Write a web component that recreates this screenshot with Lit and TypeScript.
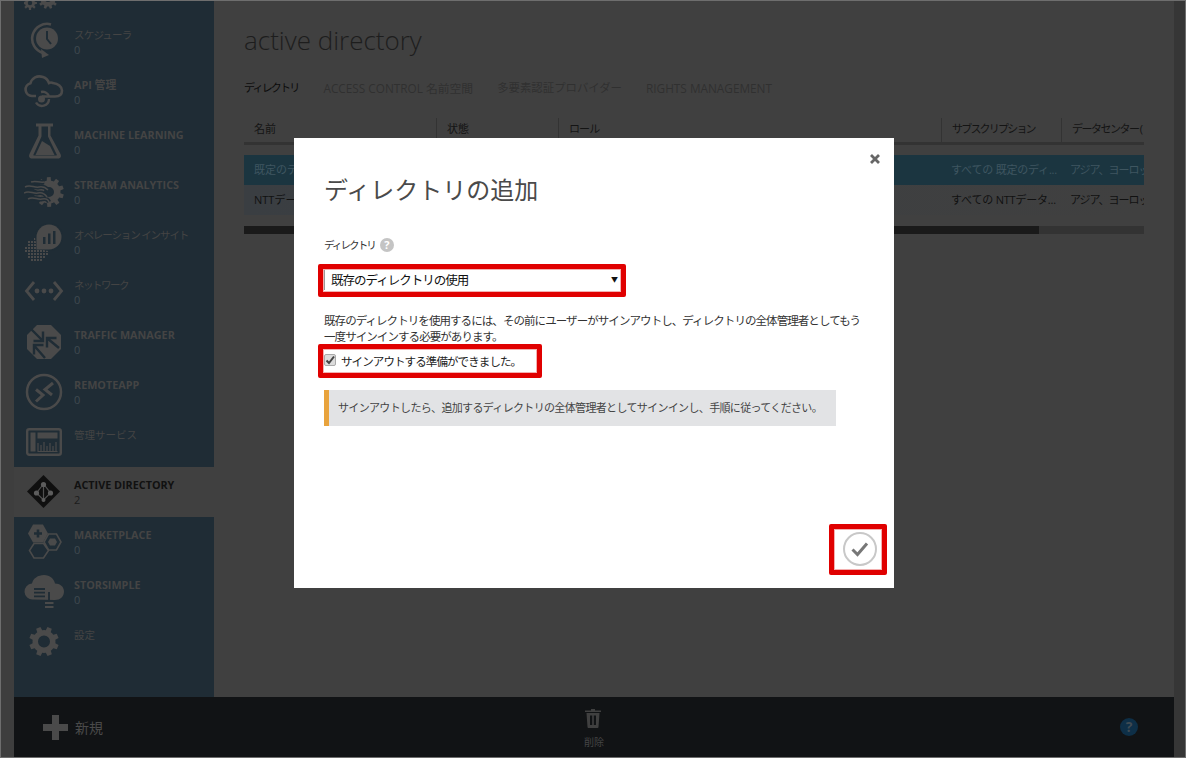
import { LitElement, html, css, svg } from "lit";
import { customElement } from "lit/decorators.js";

function gear(cx: number, cy: number, ro: number, ri: number, hole: number, teeth: number, rot = 0) {
  const pts: string[] = [];
  const step = (Math.PI * 2) / teeth;
  for (let i = 0; i < teeth; i++) {
    const a = rot + i * step;
    const seq: [number, number][] = [
      [ri, a - step * 0.5],
      [ri, a - step * 0.3],
      [ro, a - step * 0.2],
      [ro, a + step * 0.2],
      [ri, a + step * 0.3],
    ];
    for (const [r, t] of seq) {
      pts.push(`${(cx + r * Math.cos(t)).toFixed(2)} ${(cy + r * Math.sin(t)).toFixed(2)}`);
    }
  }
  const h = hole
    ? ` M${cx - hole} ${cy} a${hole} ${hole} 0 1 0 ${hole * 2} 0 a${hole} ${hole} 0 1 0 ${-hole * 2} 0 Z`
    : "";
  return `M${pts.join(" L")} Z${h}`;
}

const BG = "#1f2c35";
const FG = "#4a4a4a";

function dots() {
  const out: any[] = [];
  for (let y = 16; y < 39; y += 3) {
    for (let x = 1; x < 26; x += 3) {
      const d = Math.hypot(x - 12, y - 27);
      if (d < 11.5) out.push(svg`<rect x=${x} y=${y} width="2" height="2" fill=${FG}/>`);
    }
  }
  return out;
}

const WAVES = "M1 15c5-3 9 1 14 0s7 1 9 3M0 21c5-3 9 1 14 0s7 1 9 4M4 27c5-3 9 1 14 0s6 1 7 3M7 10c5-2 8 1 13 0";

const ICONS: Record<string, any> = {
  gears: svg`<path fill-rule="evenodd" fill=${FG} d=${gear(6, 31, 7, 5, 2.2, 8)}/><path fill-rule="evenodd" fill=${FG} d=${gear(24, 27, 10, 7.5, 3, 10)}/>`,
  schedule: svg`<circle cx="23" cy="16.5" r="11" fill=${FG}/><path d="M23 9v8l4 5" stroke=${BG} stroke-width="2" fill="none"/><path d="M27 2.4A14.6 14.6 0 0 0 19 31" fill="none" stroke=${FG} stroke-width="2.6"/><path d="M17 27l8 6-7 3z" fill=${FG}/>`,
  api: svg`<path d="M12 24H8a6.5 6.5 0 0 1-1.5-12.8C8 6 13 3 19 5c3 1 5 3 6 6 1-.5 3-.5 4 0 5 .5 9 3.5 9 7.5 0 4-3 6-7 6H18" fill="none" stroke=${FG} stroke-width="2.6"/><circle cx="17.5" cy="27" r="3.5" fill=${FG}/><path d="M25 27a7 7 0 0 1-13 3.5M17 20a7 7 0 0 1 8 4" fill="none" stroke=${FG} stroke-width="2.4"/>`,
  flask: svg`<path fill=${FG} d="M12 1.5h17v3h-2.5v9L36.5 32c1 2 .5 4-1.5 4.5H7c-2 -.5-2.5-2.5-1.5-4.5L14.5 13.5v-9H12zM17.5 4.5v10L9.5 32.5c-.3 .8 0 1 .7 1H32c.7 0 1-.2.7-1L24 14.5v-10z" fill-rule="evenodd"/><path fill=${FG} d="M18 19 L26 24 L30.5 33 H11.5 Z"/>`,
  stream: svg`<path fill-rule="evenodd" fill=${FG} d=${gear(25, 20, 15, 11.5, 5, 10, 0.3)}/><path d=${WAVES} fill="none" stroke=${BG} stroke-width="4.5"/><path d=${WAVES} fill="none" stroke=${FG} stroke-width="1.5"/>`,
  insights: svg`${dots()}<circle cx="25" cy="15" r="14" fill=${BG}/><path d="M12.5 15a12.5 12.5 0 1 1 12.5 12.5c-4 0-12.5 0-12.5 0z" fill=${FG}/><rect x="19" y="15" width="2.5" height="7" fill=${BG}/><rect x="24" y="11.5" width="2.5" height="10.5" fill=${BG}/><rect x="29" y="9" width="2.5" height="13" fill=${BG}/>`,
  network: svg`<path d="M10 10 2.5 19 10 28M30 10l7.5 9-7.5 9" fill="none" stroke=${FG} stroke-width="2.8"/><circle cx="13" cy="19" r="2.4" fill=${FG}/><circle cx="20" cy="19" r="2.4" fill=${FG}/><circle cx="27" cy="19" r="2.4" fill=${FG}/>`,
  traffic: svg`<path fill=${FG} d="M13 3h14l10 10v14L27 37H13L3 27V13z"/><path d="M7 7l11.5 11.5M19 9.5V19H9.5M35 26 23.5 16.5M23 25.5V16h9.5M21 36 10.5 24M10 32.5V23h9.5" fill="none" stroke=${BG} stroke-width="2.4"/>`,
  remote: svg`<circle cx="20" cy="20" r="17" fill="none" stroke=${FG} stroke-width="2.5"/><path d="M29 11l-8 6.500 7 5.500M12 17.500l7 5.500-7 6.500" fill="none" stroke=${FG} stroke-width="3"/>`,
  mgmt: svg`<rect x="3.2" y="7.2" width="33.6" height="25.6" rx="2" fill="none" stroke=${FG} stroke-width="2.4"/><rect x="6.5" y="10.5" width="5" height="19" fill=${FG}/><rect x="13.5" y="10.5" width="20" height="6" fill=${FG}/><path d="M14 29.5V21M17 29.5V23M20 29.5V20M23 29.5V24M26 29.5V21M29 29.5V24M32 29.5V20M13.5 29.5h20" stroke=${FG} stroke-width="1.2" fill="none"/>`,
  ad: svg`<path d="M19.5 3 36 19.5 19.5 36 3 19.5z" fill="#0f0f0f"/><path d="M19.5 12 12.5 21 19.5 28 26.5 21zM19.5 12v16" fill="none" stroke="#505050" stroke-width="1.2"/><circle cx="19.5" cy="12.5" r="2.6" fill="#5c5c5c"/><circle cx="12.5" cy="21" r="2.6" fill="#5c5c5c"/><circle cx="26.5" cy="21" r="2.6" fill="#5c5c5c"/><circle cx="19.5" cy="28" r="2" fill="#5c5c5c"/>`,
  market: svg`<path fill=${FG} d="M9 2.5h10l5 9-5 9H9l-5-9z"/><path d="M10 11.5h8M14 7.5v8" stroke=${BG} stroke-width="2.6"/><path d="M24.5 12h8l4.5 8-4.5 8h-8L20 20z" fill=${BG} stroke=${FG} stroke-width="1.6"/><path d="M26 16.5h5l2 3.5-2 3.5h-5l-2-3.5z" fill=${FG}/><path d="M10 21.5h9.5l5 7-5 7.5H10l-4.5-7.5z" fill=${BG} stroke=${FG} stroke-width="1.6"/>`,
  stor: svg`<path fill=${FG} d="M9 27.5a8 8 0 0 1-1-16c1-5 6-8.5 12-8.5s10 4 11 8.5c5 0 9 3 9 8s-4 8.5-9 8.5z"/><path d="M10 17h11M10 20.7h11M10 24.4h11M25 20v8" stroke=${BG} stroke-width="1.8" fill="none"/><path d="M21 31h8.5M21 35h8.5" stroke=${FG} stroke-width="2" fill="none"/>`,
  settings: svg`<path fill-rule="evenodd" fill=${FG} d=${gear(20, 19.5, 15, 11.5, 6, 8, 0.39)}/>`,
};

interface Item { name: string; count?: string; icon: string; bold?: boolean; active?: boolean; track?: number }

const ITEMS: Item[] = [
  { name: "", icon: "gears" },
  { name: "スケジューラ", count: "0", icon: "schedule", track: -0.8 },
  { name: "API 管理", count: "0", icon: "api", bold: true },
  { name: "MACHINE LEARNING", count: "0", icon: "flask", bold: true },
  { name: "STREAM ANALYTICS", count: "0", icon: "stream", bold: true },
  { name: "オペレーション インサイト", count: "0", icon: "insights", track: -1.1 },
  { name: "ネットワーク", count: "0", icon: "network", track: -1.5 },
  { name: "TRAFFIC MANAGER", count: "0", icon: "traffic", bold: true },
  { name: "REMOTEAPP", count: "0", icon: "remote", bold: true },
  { name: "管理サービス", icon: "mgmt" },
  { name: "ACTIVE DIRECTORY", count: "2", icon: "ad", bold: true, active: true },
  { name: "MARKETPLACE", count: "0", icon: "market", bold: true },
  { name: "STORSIMPLE", count: "0", icon: "stor", bold: true },
  { name: "設定", icon: "settings" },
];

@customElement("app-root")
export class AppRoot extends LitElement {
  static styles = css`
    :host {
      display: block;
      width: 1186px;
      height: 758px;
      font-family: "Open Sans", "Noto Sans CJK JP", sans-serif;
    }
    .frame {
      position: relative;
      box-sizing: border-box;
      width: 1186px;
      height: 758px;
      border: 1px solid #6e6e6e;
      display: grid;
      grid-template-columns: 13px 1fr 11px;
      background: #3e3e3e;
      overflow: hidden;
    }
    .rail-right { background: #363636; }
    .center {
      display: flex;
      flex-direction: column;
      min-width: 0;
      height: 756px;
    }
    .top { flex: 1; display: flex; min-height: 0; background: #404040; }
    .side {
      width: 200px;
      flex: none;
      background: #1f2c35;
      overflow: hidden;
    }
    .list { margin-top: -34px; }
    .item {
      height: 50px;
      display: flex;
      box-sizing: border-box;
      padding: 5px 0 0 10px;
    }
    .item.active { background: #404040; }
    .ico { width: 40px; height: 40px; flex: none; }
    .ico svg { display: block; }
    .txt { margin-left: 10px; padding-top: 5px; color: #444; }
    .name { font-size: 10.5px; line-height: 16px; height: 15px; white-space: nowrap; }
    .name.bold { font-weight: 700; font-size: 10.8px; }
    .cnt { font-size: 11px; line-height: 15px; color: #3f4a50; }
    .active .name { color: #111; }
    .active .cnt { color: #1c1c1c; }

    .main { flex: 1; min-width: 0; padding: 0 30px; }
    h1 {
      margin: 20px 0 0;
      font-size: 26px;
      line-height: 38px;
      font-weight: 300;
      color: #1d1d1d;
    }
    .tabs {
      display: flex;
      gap: 24px;
      margin-top: 19px;
      font-size: 11.8px;
      line-height: 20px;
      color: #303030;
      white-space: nowrap;
    }
    .tabs .on { color: #0c0c0c; font-size: 11px; letter-spacing: -1.8px; margin-right: 1px; }
    .tabs .t3 { font-size: 11.4px; }
    .table { margin-top: 20px; }
    .head {
      display: grid;
      grid-template-columns: 192px 122px 383px 120px 1fr;
      height: 24px;
      border-bottom: 3px solid #333;
      font-size: 11px;
      line-height: 22px;
      color: #141414;
    }
    .head div { padding-left: 10px; border-left: 1px solid #333; white-space: nowrap; overflow: hidden; }
    .head div:first-child { border-left: 0; }
    .head .t-sub { letter-spacing: -1.8px; }
    .head .t-dc { letter-spacing: -1.5px; }
    .head .t-role { letter-spacing: -0.9px; }
    .row {
      display: grid;
      grid-template-columns: 697px 120px 1fr;
      height: 30px;
      font-size: 11px;
      line-height: 30px;
      color: #111;
      white-space: nowrap;
    }
    .row div { overflow: hidden; padding-left: 10px; }
    .row div:last-child { padding-left: 9px; letter-spacing: -1px; }
    .row div:nth-child(2) { letter-spacing: -0.2px; }
    .row.sel { margin-top: 10px; background: #1b3540; color: #3f5660; }
    .row.plain { background: linear-gradient(90deg, #3a3e42, #404040); }
    .hscroll { margin-top: 11px; height: 8px; background: #333; }
    .hscroll i { display: block; height: 8px; width: 795px; background: #1a1a1a; }

    .foot {
      height: 60px;
      flex: none;
      background: #111315;
      display: grid;
      grid-template-columns: 1fr 1fr 1fr;
      align-items: center;
      color: #4a4a4a;
    }
    .new { display: flex; align-items: center; padding-left: 29px; gap: 7px; font-size: 14px; }
    .del { display: flex; flex-direction: column; align-items: center; font-size: 10px; line-height: 14px; gap: 7px; padding-top: 3px; color: #454545; }
    .del svg { margin-right: 2px; }
    .del svg, .new svg, .help svg { display: block; }
    .help { justify-self: end; margin-right: 36px; }

    .modal {
      position: absolute;
      left: 293px;
      top: 137px;
      width: 600px;
      height: 450px;
      box-sizing: border-box;
      background: #fff;
      padding: 33px 30px 0;
      color: #333;
    }
    .close { position: absolute; left: 575px; top: 15px; display: block; }
    h2 {
      margin: 0;
      font-size: 24px;
      line-height: 38px;
      font-weight: 400;
      color: #4a4a4a;
    }
    .lbl {
      display: flex;
      align-items: center;
      gap: 5px;
      margin-top: 28px;
      font-size: 10.5px;
      line-height: 16px;
      height: 16px;
      color: #333;
    }
    .lbl span:first-child { letter-spacing: -1.9px; }
    .q {
      width: 14px;
      height: 14px;
      border-radius: 50%;
      background: #c4c4c4;
      color: #fff;
      font: 700 11px/14px "Open Sans", sans-serif;
      text-align: center;
    }
    .select {
      margin-top: 15px;
      width: 296px;
      height: 22px;
      box-sizing: border-box;
      border-left: 1px solid #999;
      padding-left: 6px;
      display: flex;
      justify-content: space-between;
      align-items: center;
      font-size: 12.5px;
      color: #111;
    }
    .select span:first-child { letter-spacing: -1px; }
    .select span:last-child { font-size: 7px; padding-right: 2px; }
    p {
      margin: 23px 0 0;
      font-size: 11.5px;
      line-height: 16px;
      letter-spacing: -0.93px;
      color: #333;
      white-space: nowrap;
    }
    .chk {
      display: flex;
      align-items: center;
      gap: 5px;
      margin-top: 6px;
      height: 20px;
      font-size: 11.5px;
      letter-spacing: -0.9px;
      color: #222;
    }
    .box {
      width: 12px;
      height: 12px;
      box-sizing: border-box;
      border: 1px solid #aaa;
      border-radius: 2px;
      background: #dcdcdc;
      margin-top: -3px;
    }
    .box svg { display: block; }
    .note {
      margin-top: 19px;
      width: 512px;
      height: 36px;
      box-sizing: border-box;
      border-left: 5px solid #e8a33d;
      background: #e2e3e5;
      padding-left: 9px;
      font-size: 11px;
      letter-spacing: -0.66px;
      line-height: 36px;
      color: #444;
      white-space: nowrap;
    }
    .ok {
      position: absolute;
      left: 548px;
      top: 393px;
      display: block;
    }
    .mark {
      position: absolute;
      box-sizing: border-box;
      border: 5px solid #e00000;
      border-radius: 2px;
      box-shadow: inset 0 0 0 1px #f3b0b0;
    }
    .m1 { left: 317px; top: 263px; width: 308px; height: 33px; }
    .m2 { left: 317px; top: 343px; width: 224px; height: 34px; }
    .m3 { left: 828px; top: 523px; width: 58px; height: 51px; }
  `;

  render() {
    return html`
      <div class="frame">
        <div class="rail-left"></div>
        <div class="center">
          <div class="top">
            <nav class="side">
              <div class="list">
                ${ITEMS.map(
                  (it) => html`
                    <div class="item ${it.active ? "active" : ""}">
                      <div class="ico"><svg width="40" height="40" viewBox="0 0 40 40">${ICONS[it.icon]}</svg></div>
                      <div class="txt">
                        <div class="name ${it.bold ? "bold" : ""}" style=${it.track ? `letter-spacing:${it.track}px` : ""}>${it.name}</div>
                        ${it.count ? html`<div class="cnt">${it.count}</div>` : ""}
                      </div>
                    </div>
                  `
                )}
              </div>
            </nav>
            <main class="main">
              <h1>active directory</h1>
              <div class="tabs">
                <span class="on">ディレクトリ</span>
                <span>ACCESS CONTROL 名前空間</span>
                <span class="t3">多要素認証プロバイダー</span>
                <span>RIGHTS MANAGEMENT</span>
              </div>
              <div class="table">
                <div class="head">
                  <div>名前</div><div>状態</div><div class="t-role">ロール</div><div class="t-sub">サブスクリプション</div><div class="t-dc">データセンター (</div>
                </div>
                <div class="row sel">
                  <div>既定のディレクトリ</div><div>すべての 既定のディ...</div><div>アジア、ヨーロッパ</div>
                </div>
                <div class="row plain">
                  <div>NTTデータ</div><div>すべての NTTデータ...</div><div>アジア、ヨーロッパ</div>
                </div>
                <div class="hscroll"><i></i></div>
              </div>
            </main>
          </div>
          <footer class="foot">
            <div class="new">
              <svg width="25" height="25" viewBox="0 0 25 25"><path fill="#4a4a4a" d="M9 0h7v9h9v7h-9v9H9v-9H0V9h9z"/></svg>
              <span>新規</span>
            </div>
            <div class="del">
              <svg width="16" height="19" viewBox="0 0 16 19">
                <path fill="#404040" d="M6 0h4v1.5h6V3H0V1.5h6zM1.5 4h13l-1 14c0 .5-.5 1-1 1h-9c-.5 0-1-.5-1-1z"/>
                <path fill="#111315" d="M5 6.5h2.200V16H5zM8.800 6.500H11V16H8.800z"/>
              </svg>
              <span>削除</span>
            </div>
            <div class="help">
              <svg width="18" height="18" viewBox="0 0 18 18">
                <circle cx="9" cy="9" r="9" fill="#0e2f47"/>
                <text x="9" y="14" text-anchor="middle" font-family="Open Sans" font-weight="700" font-size="14" fill="#3f4a52">?</text>
              </svg>
            </div>
          </footer>
        </div>
        <div class="rail-right"></div>

        <section class="modal">
          <svg class="close" width="12" height="12" viewBox="0 0 12 12"><path d="M2 2l8 8M10 2l-8 8" stroke="#666" stroke-width="2.8"/></svg>
          <h2>ディレクトリの追加</h2>
          <div class="lbl"><span>ディレクトリ</span><span class="q">?</span></div>
          <div class="select"><span>既存のディレクトリの使用</span><span>▼</span></div>
          <p>既存のディレクトリを使用するには、その前にユーザーがサインアウトし、ディレクトリの全体管理者としてもう<br />一度サインインする必要があります。</p>
          <div class="chk">
            <span class="box"><svg width="10" height="10" viewBox="0 0 10 10"><path d="M1.5 5.5 4 8l5-6.5" fill="none" stroke="#444" stroke-width="2"/></svg></span>
            <span>サインアウトする準備ができました。</span>
          </div>
          <div class="note">サインアウトしたら、追加するディレクトリの全体管理者としてサインインし、手順に従ってください。</div>
          <svg class="ok" width="36" height="36" viewBox="0 0 36 36">
            <circle cx="18" cy="18" r="16" fill="#fff" stroke="#c8c8c8" stroke-width="2"/>
            <path d="M10.5 18.5 15.5 23.5 25 12.5" fill="none" stroke="#777" stroke-width="3"/>
          </svg>
        </section>
        <div class="mark m1"></div>
        <div class="mark m2"></div>
        <div class="mark m3"></div>
      </div>
    `;
  }
}
